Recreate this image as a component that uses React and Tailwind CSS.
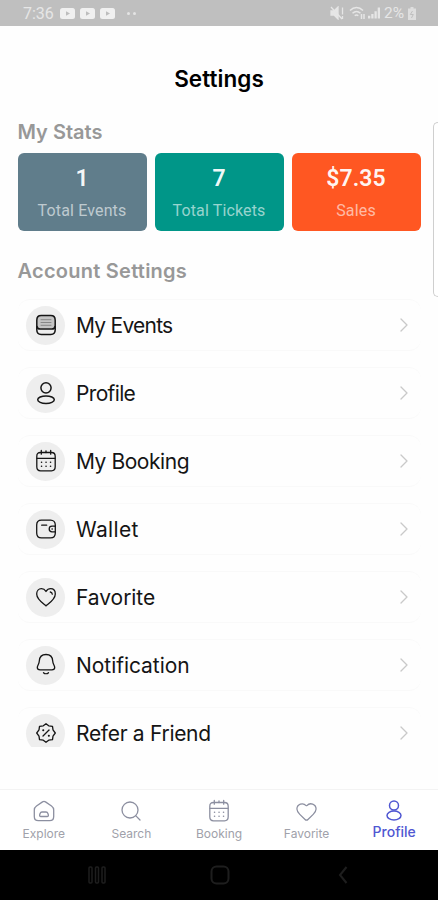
import { ChevronRight, Heart, Search } from "lucide-react";

const EventsIcon = () => (
  <svg viewBox="0 0 22 22" className="w-[22px] h-[22px]" fill="none" stroke="currentColor" strokeWidth="1.5" strokeLinecap="round">
    <path d="M1.800 14.500V6.200C1.800 3 3.300 1.500 6.200 1.500h9.600c2.900 0 4.400 1.500 4.400 4.700v8.300z" fill="#c4c4c4" stroke="none" />
    <path d="M6.200 1.500h9.600c2.900 0 4.400 1.500 4.400 4.700v9.600c0 3.200-1.500 4.700-4.400 4.700H6.200c-2.900 0-4.400-1.500-4.400-4.700V6.200c0-3.200 1.500-4.700 4.400-4.700z" />
    <path d="M2 12.500c.3 1.700 1.500 2.600 3.200 2.600h11.600c1.700 0 2.900-.9 3.200-2.600" />
    <path d="M6 5.700h10M6 8.500h10M6 11.300h10" strokeWidth="0.8" stroke="#777777" />
  </svg>
);

const ProfileIcon = () => (
  <svg viewBox="0 0 22 24" className="w-[22px] h-6" fill="none" stroke="currentColor" strokeWidth="1.5">
    <circle cx="11" cy="6.800" r="5.100" />
    <ellipse cx="11" cy="18.700" rx="8.300" ry="3.800" />
  </svg>
);

const ProfileTabIcon = () => (
  <svg viewBox="0 0 22 24" className="w-[22px] h-6" fill="none" stroke="currentColor" strokeWidth="1.5">
    <circle cx="11" cy="6.500" r="4.500" />
    <ellipse cx="11" cy="16.500" rx="7" ry="4.400" />
  </svg>
);

const BookingIcon = () => (
  <svg viewBox="0 0 22 24" className="w-[22px] h-6" fill="none" stroke="currentColor" strokeWidth="1.3" strokeLinecap="round">
    <path d="M5.500 3.500h11c2.500 0 3.700 1.100 3.700 3.700v10.600c0 2.700-1.200 4-3.700 4h-11c-2.500 0-3.700-1.300-3.700-4V7.200c0-2.600 1.200-3.700 3.700-3.700z" />
    <path d="M2 9.300h18M6.300 1.500v3.700M15.700 1.500v3.700M11 1.800v1.700" />
    <path d="M6.500 13.300h.1M11 13.300h.1M15.500 13.300h.1M6.500 17.300h.1M11 17.300h.1M15.500 17.300h.1" strokeWidth="1.500" />
  </svg>
);

const WalletIcon = () => (
  <svg viewBox="0 0 22 22" className="w-[22px] h-[22px]" fill="none" stroke="currentColor" strokeWidth="1.300" strokeLinecap="round">
    <path d="M20.300 8.200V7c0-3-1.800-4.900-4.800-4.900h-9C3.500 2.100 1.700 4 1.700 7v8c0 3 1.800 4.900 4.800 4.900h9c3 0 4.800-1.900 4.800-4.900v-1.200" />
    <path d="M20.300 8.200H17c-1.700 0-2.800 1.200-2.800 2.800s1.100 2.800 2.800 2.800h3.300z" />
    <path d="M6.700 7.200h5M17 11h.3" />
  </svg>
);

const FavoriteIcon = () => (
  <svg viewBox="0 0 22 20" className="w-[22px] h-5" fill="none" stroke="currentColor" strokeWidth="1.300" strokeLinecap="round" strokeLinejoin="round">
    <path d="M11 18.900C7 15.700 1.700 12.200 1.700 7c0-3.200 2-5.300 4.700-5.300 2.100 0 3.600 1.200 4.600 2.800 1-1.600 2.500-2.800 4.600-2.800 2.700 0 4.700 2.100 4.700 5.300 0 5.200-5.300 8.700-9.300 11.900z" />
    <path d="M15.300 5c1.200.2 1.900 1 2 2.200" />
  </svg>
);

const NotificationIcon = () => (
  <svg viewBox="0 0 22 24" className="w-[22px] h-6" fill="none" stroke="currentColor" strokeWidth="1.300" strokeLinecap="round" strokeLinejoin="round">
    <path d="M11 1.500C6.800 1.500 4.500 4.300 4.300 8c-.2 3.500-2 4.300-2 6.500 0 1.500 1.200 2.300 2.800 2.300h11.800c1.600 0 2.800-.8 2.800-2.300 0-2.200-1.800-3-2-6.500-.2-3.700-2.500-6.500-6.700-6.500z" />
    <path d="M8.500 19.700c1.300 1.300 3.700 1.300 5 0" />
  </svg>
);

const ReferIcon = () => (
  <svg viewBox="0 0 22 22" className="w-[22px] h-[22px]" fill="none" stroke="currentColor" strokeWidth="1.300" strokeLinecap="round" strokeLinejoin="round">
    <path d="M11 1.700l2.700 2.100 3.800.5.500 3.500 2.300 3.200-2.300 3.200-.5 3.500-3.800.5-2.700 2.100-2.700-2.100-3.800-.5-.5-3.500L1.700 11 4 7.800l.5-3.500 3.800-.5z" />
    <path d="M8 14l6-6" />
    <path d="M8.200 8.300h.1M13.800 13.800h.1" strokeWidth="2" />
  </svg>
);

const ExploreIcon = () => (
  <svg viewBox="0 0 22 22" className="w-[22px] h-[22px]" fill="none" stroke="currentColor" strokeWidth="1.300" strokeLinejoin="round">
    <path d="M9.500 1.900L3.500 6C2 7.100 1.300 8.300 1.300 10v6.500c0 2.800 1.400 4.200 4 4.200h11.400c2.600 0 4-1.400 4-4.200V10c0-1.700-.7-2.900-2.200-4l-6-4.100c-1-.7-2-.7-3 0z" />
    <path d="M9 12h4c1 0 1.600.5 1.900 1.500l.4 1.300c.3 1-.2 1.700-1.200 1.700H7.900c-1 0-1.500-.7-1.200-1.700l.4-1.300C7.400 12.500 8 12 9 12z" />
  </svg>
);

const stats = [
  { value: "1", label: "Total Events", color: "bg-[#607d8b]" },
  { value: "7", label: "Total Tickets", color: "bg-[#009688]" },
  { value: "$7.35", label: "Sales", color: "bg-[#ff5722]" },
];

const menuItems = [
  { label: "My Events", icon: EventsIcon, tracking: "tracking-[-0.75px]" },
  { label: "Profile", icon: ProfileIcon, tracking: "tracking-[-0.65px]" },
  { label: "My Booking", icon: BookingIcon, tracking: "tracking-[-0.45px]" },
  { label: "Wallet", icon: WalletIcon, tracking: "tracking-[0.35px]" },
  { label: "Favorite", icon: FavoriteIcon, tracking: "tracking-[-0.05px]" },
  { label: "Notification", icon: NotificationIcon, tracking: "tracking-[-0.05px]" },
  { label: "Refer a Friend", icon: ReferIcon, tracking: "tracking-[-0.3px]" },
];

const tabs = [
  { label: "Explore", icon: ExploreIcon },
  { label: "Search", icon: () => <Search className="w-6 h-6" strokeWidth={1.3} /> },
  { label: "Booking", icon: BookingIcon },
  { label: "Favorite", icon: () => <Heart className="w-[23px] h-[23px]" strokeWidth={1.3} /> },
  { label: "Profile", icon: ProfileTabIcon, active: true },
];

function VideoBadge() {
  return (
    <svg viewBox="0 0 15 11" className="w-[15px] h-[11px]">
      <rect width="15" height="11" rx="2.500" fill="#f0f0f0" />
      <path d="M6 3.300l4 2.200-4 2.200z" fill="#bdbdbd" />
    </svg>
  );
}

function StatusBar() {
  return (
    <div className="h-[26px] shrink-0 bg-[#bfbfbf] text-[#e6e6e6] flex items-center pl-[23px] pr-[22px] font-[Roboto,sans-serif]">
      <span className="w-[37px] text-[16px] leading-none pt-0.5">7:36</span>
      <div className="flex gap-[5px]">
        <VideoBadge />
        <VideoBadge />
        <VideoBadge />
      </div>
      <div className="flex gap-[3px] ml-3">
        <span className="w-[3px] h-[3px] rounded-full bg-[#e4e4e4]" />
        <span className="w-[3px] h-[3px] rounded-full bg-[#e4e4e4]" />
      </div>
      <div className="flex items-center ml-auto">
        <svg viewBox="0 0 14 14" className="w-[14px] h-[14px] mr-[5px]" fill="none" stroke="currentColor" strokeWidth="1.300">
          <path d="M1 5h3l4-4v12L4 9H1z" fill="currentColor" />
          <path d="M1 1l11 12M12.500 1.500v7M12.500 10v3" />
        </svg>
        <svg viewBox="0 0 17 14" className="w-[17px] h-[14px] mr-0.5" fill="none" stroke="currentColor" strokeWidth="1.500">
          <path d="M1 4.500c4-4 9-4 13 0M3.500 7.300c2.500-2.300 5.500-2.300 8 0M5.700 9.700c1.200-1 2.500-1 3.600 0M12.500 8v5M15 8v5" />
        </svg>
        <svg viewBox="0 0 13 12" className="w-[12px] h-[12px] mr-1" fill="currentColor">
          <path d="M0 9h2.500v3H0zM3.500 7H6v5H3.500zM7 4h2.500v8H7zM10.500 0H13v12h-2.500z" />
        </svg>
        <span className="text-[15.500px] leading-none pt-0.5">2%</span>
        <svg viewBox="0 0 8 13" className="w-[8px] h-[13px] ml-1">
          <path d="M2.500 0h3v1.500H8V13H0V1.500h2.500z" fill="#dedede" />
          <path d="M4.500 4L2.300 7.500h3L3.500 11" stroke="#bfbfbf" fill="none" />
        </svg>
      </div>
    </div>
  );
}

export default function App() {
  return (
    <div className="relative w-full h-[900px] flex flex-col overflow-hidden bg-[#fefefe] font-[Inter,sans-serif]">
      <StatusBar />

      <main className="h-[721px] shrink-0 overflow-hidden px-[17.5px]">
        <h1 className="mt-[38px] text-center text-[22.500px] leading-[30px] font-semibold tracking-[0.05px] text-black">Settings</h1>

        <h2 className="mt-6 h-7 text-[20px] leading-[28px] font-semibold text-[#989898]">My Stats</h2>
        <div className="mt-[7px] grid grid-cols-3 gap-2 font-[Roboto,sans-serif]">
          {stats.map((stat) => (
            <div key={stat.label} className={`h-[78px] rounded-md flex flex-col items-center pt-3 ${stat.color}`}>
              <span className="text-[23px] leading-[28px] font-semibold tracking-[0.1px] text-white/95">{stat.value}</span>
              <span className="mt-2 text-[16px] leading-[20px] tracking-[0.15px] text-white/60">{stat.label}</span>
            </div>
          ))}
        </div>

        <h2 className="mt-[26px] h-7 text-[20px] leading-[28px] font-semibold tracking-[0.25px] text-[#989898]">Account Settings</h2>
        <ul className="mt-[14px] flex flex-col gap-4">
          {menuItems.map(({ label, icon: Icon, tracking }) => (
            <li key={label} className="h-[52px] shrink-0 rounded-xl border-y border-[#f9f9f9] flex items-center pl-[8.500px] pr-[5px]">
              <span className="w-[39px] h-[39px] rounded-full bg-[#eeeeee] text-[#151515] flex items-center justify-center">
                <Icon />
              </span>
              <span className={`ml-[11px] pt-px text-[21px] leading-[28px] text-[#151515] ${tracking}`}>{label}</span>
              <ChevronRight className="ml-auto w-6 h-6 text-[#c9c9c9]" strokeWidth={1.3} />
            </li>
          ))}
        </ul>
      </main>

      <div className="flex-1" />

      <nav className="h-[61px] shrink-0 border-t border-[#f3f3f3] bg-white grid grid-cols-5">
        {tabs.map(({ label, icon: Icon, active }) => (
          <a key={label} className={`flex flex-col items-center ${active ? "text-[#5057d2]" : "text-[#8c8fa0]"}`}>
            <span className="h-6 mt-[9px] flex items-center justify-center">
              <Icon />
            </span>
            <span className={active ? "mt-px text-[14px] leading-4 font-medium" : "mt-[3px] text-[12px] leading-4 text-[#a0a1aa]"}>{label}</span>
          </a>
        ))}
      </nav>

      <div className="h-[50px] shrink-0 bg-black text-[#1e1e1e] flex items-center justify-between pl-[88px] pr-[89px]">
        <svg viewBox="0 0 18 18" className="w-[18px] h-[18px]" fill="none" stroke="currentColor" strokeWidth="1.500">
          <rect x="1" y="1" width="3" height="16" rx="1" />
          <rect x="7.500" y="1" width="3" height="16" rx="1" />
          <rect x="14" y="1" width="3" height="16" rx="1" />
        </svg>
        <svg viewBox="0 0 20 20" className="w-5 h-5 mr-[3px]" fill="none" stroke="currentColor" strokeWidth="2">
          <rect x="1.500" y="1.500" width="17" height="17" rx="5" />
        </svg>
        <svg viewBox="0 0 12 18" className="w-3 h-[18px]" fill="none" stroke="currentColor" strokeWidth="2">
          <path d="M9.500 1L3 9l6.500 8" />
        </svg>
      </div>

      {/* edge panel handle */}
      <div className="absolute right-0 top-[122px] w-[5px] h-[175px] rounded-l-md border border-r-0 border-[#cfcfcf] bg-white" />
    </div>
  );
}
